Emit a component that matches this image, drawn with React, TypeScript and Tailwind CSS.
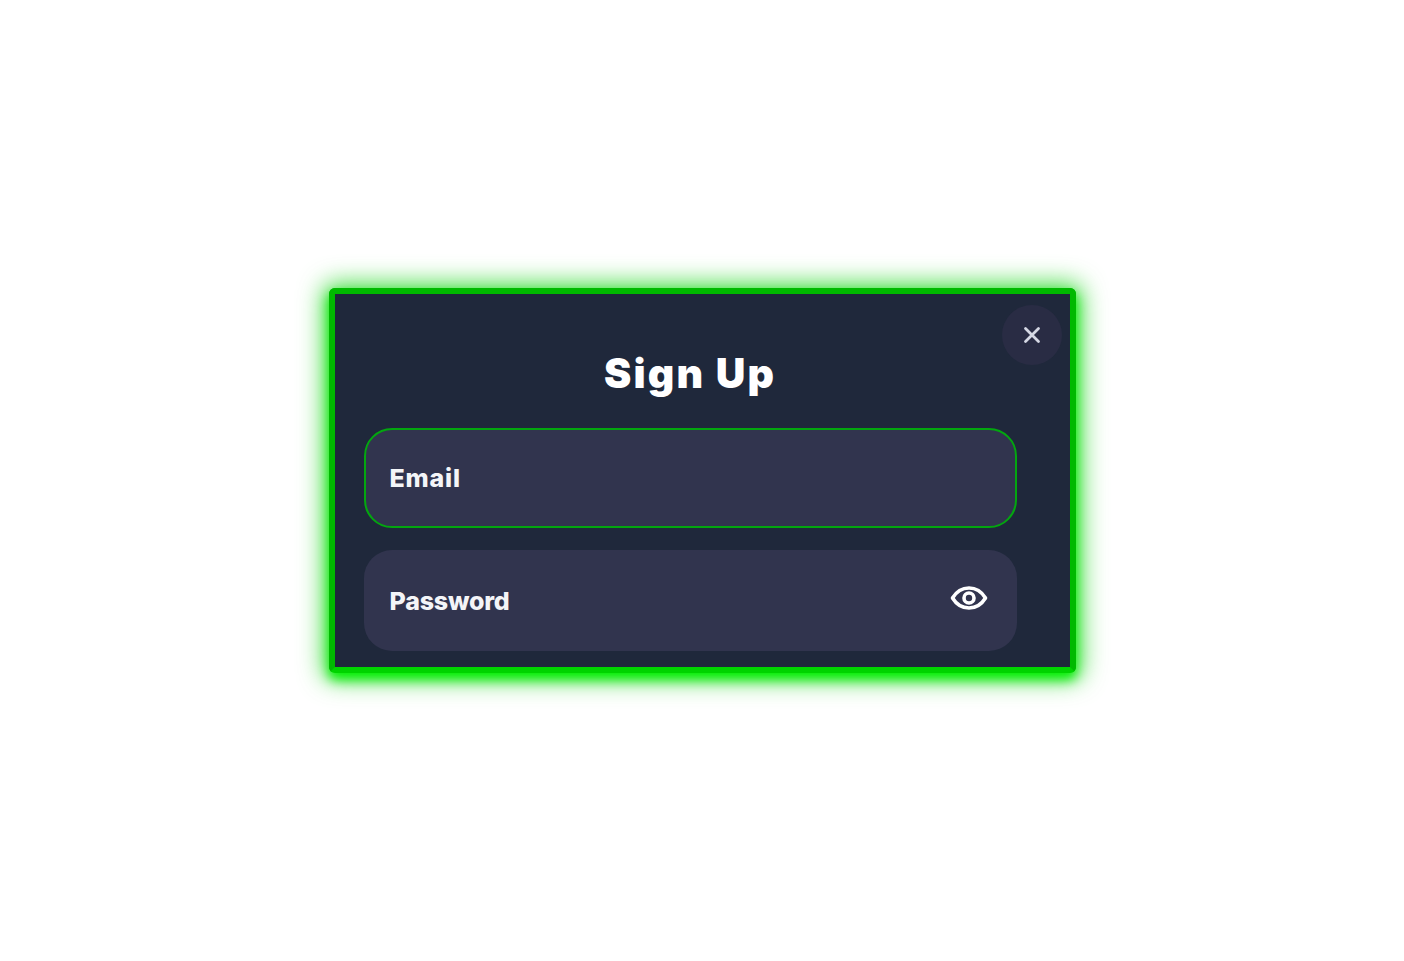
import React from "react";

function Eye() {
  return (
    <svg width="38" height="26" viewBox="0 0 38 26" fill="none" stroke="#ffffff" strokeWidth="3.6" strokeLinecap="round" strokeLinejoin="round">
      <path d="M2.5 13C6.5 6.5 12 3 19 3S31.5 6.5 35.5 13C31.5 19.5 26 23 19 23S6.5 19.5 2.5 13Z" />
      <circle cx="19" cy="13" r="5" />
    </svg>
  );
}

export default function App() {
  return (
    <div className="min-h-screen bg-white flex items-center justify-center font-['Inter',sans-serif]">
      <div className="relative w-[747px] h-[385px] rounded-[6px] bg-[#1f283b] border-[6px] border-[#00b900] border-b-[#00d400] shadow-[0_6px_12px_0_#00f000,0_1px_24px_6px_rgba(0,210,0,0.7)]">
        <div className="flex flex-col items-stretch pl-[29px] pr-[53px] pt-[51px] h-full overflow-hidden">
          <h1 className="h-[56px] flex items-center justify-center text-[41px] font-black leading-none text-white tracking-[2.2px]">Sign Up</h1>
          <div className="mt-[27px] h-[100px] rounded-[28px] border-2 border-[#03a60f] bg-[#31344e] flex items-center px-[24px]">
            <span className="mt-[2px] text-[25px] font-extrabold text-[#f4f5f8] tracking-[0.8px]">Email</span>
          </div>
          <div className="mt-[22px] h-[101px] rounded-[28px] bg-[#31344e] flex items-center justify-between pl-[26px] pr-[29px]">
            <span className="mt-[2px] text-[25px] font-extrabold text-[#f4f5f8] tracking-[-0.2px]">Password</span>
            <span className="-mt-[6px] flex"><Eye /></span>
          </div>
        </div>
        <button className="absolute right-[8px] top-[11px] w-[60px] h-[60px] rounded-full bg-[#292c44] flex items-center justify-center">
          <svg width="18" height="18" viewBox="0 0 18 18" fill="none" stroke="#d5d8e4" strokeWidth="2.8" strokeLinecap="round">
            <path d="M2.5 2.5L15.5 15.5M15.5 2.5L2.5 15.5" />
          </svg>
        </button>
      </div>
    </div>
  );
}
